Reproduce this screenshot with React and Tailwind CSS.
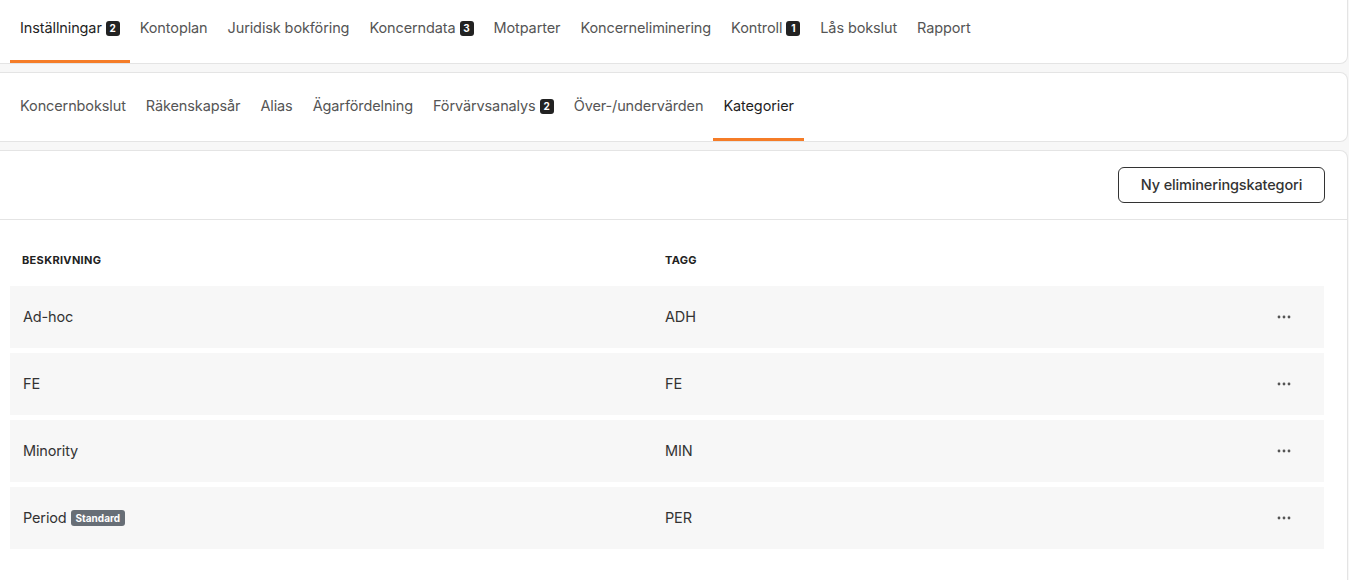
import React from "react";

const font = { fontFamily: "Inter, 'Noto Sans', sans-serif" };

function Badge({ n }) {
  return (
    <span className="ml-[4px] inline-flex h-[15px] w-[14px] items-center justify-center rounded-[3px] bg-[#222] text-[10px] font-bold leading-none tracking-normal text-white">
      {n}
    </span>
  );
}

function Tab({ label, badge, active, pt }) {
  return (
    <div
      className={
        "flex h-full items-start px-[10px] border-b-[3px] " +
        pt +
        " " +
        (active ? "border-[#f57c27] text-[#1f1f1f]" : "border-transparent text-[#555]")
      }
    >
      <span className="flex items-center text-[14.5px] leading-[20px] tracking-[-0.008em]">
        {label}
        {badge && <Badge n={badge} />}
      </span>
    </div>
  );
}

function Dots() {
  return (
    <svg width="14" height="4" viewBox="0 0 14 4">
      <circle cx="2" cy="2" r="1.4" fill="#555" />
      <circle cx="7" cy="2" r="1.4" fill="#555" />
      <circle cx="12" cy="2" r="1.4" fill="#555" />
    </svg>
  );
}

const top = [
  ["Inställningar", "2", true],
  ["Kontoplan"],
  ["Juridisk bokföring"],
  ["Koncerndata", "3"],
  ["Motparter"],
  ["Koncerneliminering"],
  ["Kontroll", "1"],
  ["Lås bokslut"],
  ["Rapport"],
];

const sub = [
  ["Koncernbokslut"],
  ["Räkenskapsår"],
  ["Alias"],
  ["Ägarfördelning"],
  ["Förvärvsanalys", "2"],
  ["Över-/undervärden"],
  ["Kategorier", null, true],
];

const rows = [
  ["Ad-hoc", "ADH"],
  ["FE", "FE"],
  ["Minority", "MIN"],
  ["Period", "PER", true],
];

export default function App() {
  return (
    <div style={font} className="flex h-screen flex-col gap-2 overflow-hidden bg-[#f7f7f7] pr-[1px]">
      <div className="flex h-[64px] shrink-0 border-b border-r border-[#e4e4e4] bg-white rounded-br-lg pl-[10px]">
        {top.map(([l, b, a]) => (
          <Tab key={l} label={l} badge={b} active={a} pt="pt-[18px]" />
        ))}
      </div>
      <div className="flex h-[70px] shrink-0 border-y border-r border-[#e4e4e4] bg-white rounded-r-lg pl-[10px]">
        {sub.map(([l, b, a]) => (
          <Tab key={l} label={l} badge={b} active={a} pt="pt-[23px]" />
        ))}
      </div>
      <div className="h-[520px] shrink-0 border-y border-r border-[#e4e4e4] bg-white rounded-r-lg">
        <div className="flex justify-end border-b border-[#e4e4e4] py-4 pr-[22px]">
          <button className="h-[36px] w-[207px] rounded-[6px] border border-[#333] text-[14.5px] font-medium tracking-[-0.01em] text-[#333]">
            Ny elimineringskategori
          </button>
        </div>
        <div className="pl-[10px] pr-[23px] pt-[33px]">
          <div className="grid grid-cols-[642px_1fr_24px] pl-[12px] pr-[28px] pb-[18px] text-[11px] font-bold leading-[15px] tracking-[0.03em] text-[#222]">
            <div>BESKRIVNING</div>
            <div className="pl-[1px]">TAGG</div>
            <div />
          </div>
          <div className="flex flex-col gap-[5px]">
            {rows.map(([d, t, s]) => (
              <div
                key={d}
                className="grid h-[62px] grid-cols-[642px_1fr_24px] items-center bg-[#f7f7f7] pl-[13px] pr-[28px] text-[14.5px] tracking-[-0.01em] text-[#333]"
              >
                <div className="flex items-center">
                  {d}
                  {s && (
                    <span className="ml-[4px] inline-flex h-[16px] items-center rounded-[3px] bg-[#676e76] px-[5px] text-[10px] font-bold tracking-normal text-white">
                      Standard
                    </span>
                  )}
                </div>
                <div>{t}</div>
                <div className="flex justify-center">
                  <Dots />
                </div>
              </div>
            ))}
          </div>
        </div>
      </div>
    </div>
  );
}
